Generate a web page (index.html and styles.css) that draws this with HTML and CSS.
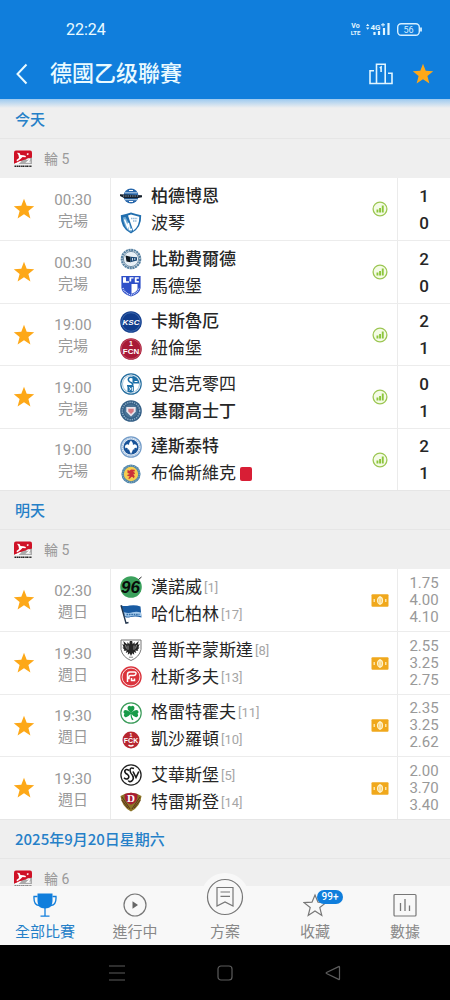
FILE: index.html
```
<!DOCTYPE html>
<html lang="zh-Hant">
<head>
<meta charset="utf-8">
<meta name="viewport" content="width=device-width, initial-scale=1">
<title>德國乙级聯賽</title>
<link rel="stylesheet" href="styles.css">
</head>
<body>
<svg class="defs" aria-hidden="true">
  <symbol id="star" viewBox="0 0 22 22"><path d="M11 .8l2.7 7 7.5.4-5.8 4.7 2 7.5L11 16.2l-6.4 4.2 2-7.5L.8 8.2l7.5-.4z" fill="currentColor"/></symbol>
  <symbol id="stats" viewBox="0 0 16 16"><circle cx="8" cy="8" r="6.9" fill="#f4fbe6" stroke="#9cc653" stroke-width="1.3"/><path d="M4.5 8.600h1.900v3H4.500zM7.100 7H9v4.600H7.100zM9.800 4.400h1.900v7.200H9.800z" fill="#8cc63c"/></symbol>
  <symbol id="cash" viewBox="0 0 18 13"><rect x=".5" y=".3" width="17" height="12.4" rx="1" fill="#f0a81c"/><ellipse cx="9" cy="6.500" rx="2.500" ry="3.300" fill="#f6c866" stroke="#fff3cc" stroke-width="1.200"/><path d="M9 2v9M3.200 5v3M14.800 5v3" stroke="#fff3cc" stroke-width="1.200"/></symbol>
  <symbol id="league" viewBox="0 0 18 18"><path d="M0 2.5Q0 .5 2 .5h14q2 0 2 2V8L0 14z" fill="#cf1126"/><path d="M18 7.5V14H0l8-3.6z" fill="#aaa"/><path d="M3 2.700l2.500.3L6.500 5l3 .3 2.500.7-.500 1.200-3-.200L6.500 9 3 11.500 2.500 10l2.500-2-.500-3zM12.500 4l1.500-1 .800 1-1 1.200zM0 14l6-3 1.500.500L4.500 14z" fill="#fff"/><path d="M12.500 9.500q3.500-1.500 3 .5L13 12.200h3.500" fill="none" stroke="#fff" stroke-width="1.200"/><path d="M.5 16.300h17" stroke="#222" stroke-width="1.500" stroke-dasharray="2 .5 1 .4"/></symbol>
</svg>

<div class="app">
  <header class="top">
    <div class="status">
      <time>22:24</time>
      <div class="status-icons">
        <svg width="11" height="14" viewBox="0 0 11 14" role="img" aria-label="VoLTE"><text x="5.500" y="6" class="tiny-text" font-size="7">Vo</text><text x="5.500" y="13" class="tiny-text" font-size="6">LTE</text></svg>
        <svg class="signal" width="24" height="14" viewBox="0 0 24 14" role="img" aria-label="4G"><path d="M0 4L1.700 1.800 3.400 4zM0 5.500L1.700 7.700 3.400 5.500z" fill="#e2f6ff"/><text x="9.500" y="7.500" class="tiny-text" font-size="8">4G</text><path d="M8.500 10v3M13 9v4M18 6v7M22.500 1v12" stroke="#e2f6ff" stroke-width="2.200"/><path d="M15 2.800h4M17 1v3.600" stroke="#e2f6ff"/></svg>
        <svg class="battery" width="25" height="13" viewBox="0 0 25 13" role="img" aria-label="56%"><rect x=".7" y=".7" width="21.600" height="11.600" rx="3.500" fill="none" stroke="#d6efff" stroke-width="1.400"/><path d="M24 4.500v4" stroke="#d6efff" stroke-width="1.800"/><text x="11.500" y="9.700" class="battery-text" font-size="9">56</text></svg>
      </div>
    </div>
    <div class="title-bar">
      <button class="icon-btn back" aria-label="返回"><svg width="12" height="22" viewBox="0 0 12 22"><path d="M10.500 1.500L1.500 11l9 9.500" fill="none" stroke="#e9faff" stroke-width="2"/></svg></button>
      <h1>德國乙级聯賽</h1>
      <button class="icon-btn table" aria-label="積分榜"><svg width="24" height="22" viewBox="0 0 24 22"><path d="M7.500 20.500V1.200h8.700v19.300M5 7.700H1v12.800h22V10.300h-4M10.800 5l1.300-1v5" fill="none" stroke="#e1f5ff" stroke-width="1.600"/></svg></button>
      <button class="icon-btn" aria-label="收藏聯賽"><svg class="star" width="22" height="22"><use href="#star"/></svg></button>
    </div>
  </header>

  <main class="list">
    <section>
      <h2 class="day">今天</h2>
      <h3 class="round"><svg width="18" height="18"><use href="#league"/></svg><span>輪 5</span></h3>
      <div class="matches">
        <article class="match">
          <button class="fav" aria-label="收藏"><svg class="star" width="22" height="22"><use href="#star"/></svg></button>
          <p class="when"><time>00:30</time><span>完場</span></p>
          <div class="teams">
            <p class="team winner"><svg class="crest" viewBox="0 0 22 22"><circle cx="11" cy="11" r="7.500" fill="#2867ab"/><path d="M5 7.800h12M4.500 14.700h13" stroke="#bcd5ec"/><path d="M0 9.200L22 10.200v2L17 13.200H4.500L0 11z" fill="#16202c"/><path d="M3 11h16" stroke="#8eadc8" stroke-dasharray="1.300 1"/><path d="M9 5.500h4M9 16.500h4" stroke="#fff" stroke-width="1.200"/></svg>柏德博恩</p>
            <p class="team"><svg class="crest" viewBox="0 0 22 22"><path d="M.8 3.200Q6 2.300 11 .6q5 1.700 10.200 2.600.5 13.300-10.200 18.200Q.3 16.500.8 3.200z" fill="#216eae"/><path d="M8 3.400l3-.8 8.300 2.100q.2 9.800-6.100 14z" fill="#fff"/><path d="M3 5.500l2.500-.6L12.500 18 11 20Q3.500 16.300 3 5.500z" fill="#75add5"/><path d="M4.500 7.500l3 7.500 1-4 1 6.500h2.500" stroke="#fff" fill="none" stroke-width="1.400"/><path d="M11 6.500h6.500M13 9h3.500" stroke="#8cb6d7" stroke-width="1.300" stroke-dasharray="1.500 .6"/></svg>波琴</p>
          </div>
          <svg class="kind" width="16" height="16"><use href="#stats"/></svg>
          <p class="score"><span>1</span><span>0</span></p>
        </article>
        <article class="match">
          <button class="fav" aria-label="收藏"><svg class="star" width="22" height="22"><use href="#star"/></svg></button>
          <p class="when"><time>00:30</time><span>完場</span></p>
          <div class="teams">
            <p class="team winner"><svg class="crest" viewBox="0 0 22 22"><circle cx="11" cy="11" r="9.200" fill="#fff" stroke="#5a83a3" stroke-width="2.200" stroke-dasharray="2.200 .5"/><circle cx="11" cy="11" r="7.600" fill="#e9f0f6" stroke="#4e7392" stroke-width=".8"/><path d="M5.500 7.500l5 1.300v5.400l-4-.7z" fill="#101820"/><path d="M10.400 8.800l6.600.4v3.300l-6.600 1.700z" fill="#1e4a75"/><path d="M12.500 10v2.500M14.800 10v2" stroke="#fff" stroke-width=".8"/></svg>比勒費爾德</p>
            <p class="team"><svg class="crest" viewBox="0 0 22 22"><path d="M1.400 1h19.200v12Q19.800 19 11 21.600 2.200 19 1.400 13z" fill="#2e4fc8"/><path d="M3 2.200h3v4h3v1.500H3zM9.500 2.200h4v1.300h-2.300v3H9.500zM18.800 2.200h-4v5.300h4V6h-2.200V3.700h2.200zM11.500 9h6v5q-1 3-6 4.700z" fill="#fff"/><path d="M3 13q1.300 5 8 7 6.700-2 8-7" fill="none" stroke="#d8e1fc" stroke-width="1.300" stroke-dasharray="1 .8"/></svg>馬德堡</p>
          </div>
          <svg class="kind" width="16" height="16"><use href="#stats"/></svg>
          <p class="score"><span>2</span><span>0</span></p>
        </article>
        <article class="match">
          <button class="fav" aria-label="收藏"><svg class="star" width="22" height="22"><use href="#star"/></svg></button>
          <p class="when"><time>19:00</time><span>完場</span></p>
          <div class="teams">
            <p class="team winner"><svg class="crest" viewBox="0 0 22 22"><circle cx="11" cy="11" r="10.800" fill="#103c8c"/><circle cx="11" cy="11" r="9.300" fill="none" stroke="#4a78ba" stroke-width=".7"/><text x="11" y="14" class="crest-text crest-italic" font-size="8" fill="#fff">KSC</text></svg>卡斯魯厄</p>
            <p class="team"><svg class="crest" viewBox="0 0 22 22"><circle cx="11" cy="11" r="10.800" fill="#a81936"/><circle cx="11" cy="11" r="9.800" fill="none" stroke="#d77689" stroke-width=".5"/><text x="11" y="7.500" class="crest-text" font-size="7" fill="#fff">1</text><text x="11" y="15.500" class="crest-text" font-size="8" fill="#fff">FCN</text></svg>紐倫堡</p>
          </div>
          <svg class="kind" width="16" height="16"><use href="#stats"/></svg>
          <p class="score"><span>2</span><span>1</span></p>
        </article>
        <article class="match">
          <button class="fav" aria-label="收藏"><svg class="star" width="22" height="22"><use href="#star"/></svg></button>
          <p class="when"><time>19:00</time><span>完場</span></p>
          <div class="teams">
            <p class="team"><svg class="crest" viewBox="0 0 22 22"><circle cx="11" cy="11" r="10.200" fill="#fff" stroke="#246d9e" stroke-width="1.200"/><circle cx="11" cy="11" r="8.500" fill="none" stroke="#5c96bd" stroke-width=".6"/><path d="M12.500 2.800q6 1.200 6.800 7.700h-6.800zM7.500 12.500h6.300v6l-3 1-3.300-.7z" fill="#1c6fa7"/><path d="M14 5Q8.300 3 8.300 6.800q.4 2 3.200 3 2.500 1.700 0 2.900H7" fill="none" stroke="#1c6fa7" stroke-width="1.600"/><path d="M9 14.500l2 1.200-1.500 1.700M12.300 14v4M14.500 8.500h3" fill="none" stroke="#fff"/></svg>史浩克零四</p>
            <p class="team winner"><svg class="crest" viewBox="0 0 22 22"><circle cx="11" cy="11" r="10.800" fill="#345f86"/><circle cx="11" cy="11" r="8.700" fill="none" stroke="#8fb0c8" stroke-width="1.400" stroke-dasharray="1.300 1"/><circle cx="11" cy="11" r="6.800" fill="#497396"/><path d="M6.300 7h9.400v4.700L11 16.500l-4.700-4.800z" fill="#e8e5ed"/><path d="M8.300 8.800h5.400v2.600L11 14l-2.700-2.600z" fill="#d67882"/></svg>基爾高士丁</p>
          </div>
          <svg class="kind" width="16" height="16"><use href="#stats"/></svg>
          <p class="score"><span>0</span><span>1</span></p>
        </article>
        <article class="match">
          <span class="fav"></span>
          <p class="when"><time>19:00</time><span>完場</span></p>
          <div class="teams">
            <p class="team winner"><svg class="crest" viewBox="0 0 22 22"><circle cx="11" cy="11" r="10.200" fill="#e4edf7" stroke="#729bc8" stroke-width="1.200"/><circle cx="11" cy="11" r="8.700" fill="none" stroke="#86aad0" stroke-dasharray="1 1"/><circle cx="11" cy="11" r="7.600" fill="#1a5499"/><path d="M11 4.500q3.300 3.200 1.200 7 .3-3.500 2.800-3.300 3 1 1.500 4.300-.8-1.300-2.300.1l.3.900h-1.500L12 16l-1 2-1-2-1-2.500H7.500l.3-.9q-1.500-1.400-2.300-.1Q4 9.200 7 8.200q2.500-.2 2.800 3.300-2.100-3.800 1.200-7z" fill="#fff"/></svg>達斯泰特</p>
            <p class="team"><svg class="crest" viewBox="0 0 22 22"><circle cx="11" cy="11" r="9.600" fill="#4e83aa"/><circle cx="11" cy="11" r="8.300" fill="none" stroke="#a6c4c9" stroke-width=".8" stroke-dasharray="1 1"/><circle cx="11" cy="11" r="7.200" fill="#f5ce51"/><path d="M7.500 7l2 .8L11 6.500l3.500.2.500 1.500-2 .3 2 1.500-.5 1.200-1.300-.4 1.500 2.700-.9 1.700-1.500-1.500-1 .3-1.500 1.700-1.700-.3 1.700-2.200-2.500-.2.200-1.300 2.500-.6-2.500-1.200z" fill="#cc3238"/></svg>布倫斯維克<span class="red-card" role="img" aria-label="紅牌"></span></p>
          </div>
          <svg class="kind" width="16" height="16"><use href="#stats"/></svg>
          <p class="score"><span>2</span><span>1</span></p>
        </article>
      </div>
    </section>

    <section>
      <h2 class="day">明天</h2>
      <h3 class="round"><svg width="18" height="18"><use href="#league"/></svg><span>輪 5</span></h3>
      <div class="matches">
        <article class="match">
          <button class="fav" aria-label="收藏"><svg class="star" width="22" height="22"><use href="#star"/></svg></button>
          <p class="when"><time>02:30</time><span>週日</span></p>
          <div class="teams">
            <p class="team"><svg class="crest" viewBox="0 0 22 22"><circle cx="11" cy="11" r="10.800" fill="#3ba15c"/><text x="10.500" y="17" class="crest-text crest-italic" font-size="17" fill="#080c09">96</text><path d="M18.500 3.500L21.500 1" stroke="#222"/></svg>漢諾威<small>[1]</small></p>
            <p class="team"><svg class="crest" viewBox="0 0 22 22"><path d="M1 2.200q4 1.600 8.500.3 6-1 11 1l1 11q-6-1.800-11-.4-3 1-5.500 0z" fill="#195ba2"/><path d="M4 9.300q5 1.200 8.500-.1 4-.9 8.500.2v3.800q-5-1.200-9-.1-3.500 1-7 .2z" fill="#a5caec"/><path d="M6.500 11.500h13" stroke="#326da6" stroke-width="1.600" stroke-dasharray="1.600 .8"/><path d="M1 2.200l5 18 2.500-.7" fill="none" stroke="#22354c" stroke-width="1.400"/></svg>哈化柏林<small>[17]</small></p>
          </div>
          <svg class="kind" width="18" height="13"><use href="#cash"/></svg>
          <p class="odds"><span>1.75</span><span>4.00</span><span>4.10</span></p>
        </article>
        <article class="match">
          <button class="fav" aria-label="收藏"><svg class="star" width="22" height="22"><use href="#star"/></svg></button>
          <p class="when"><time>19:30</time><span>週日</span></p>
          <div class="teams">
            <p class="team"><svg class="crest" viewBox="0 0 22 22"><path d="M1 1h20v9.500Q19.500 18 11 21.500 2.500 18 1 10.500z" fill="#fff" stroke="#777"/><path d="M9.800 2h2.400l.5 3.200L14.500 3l.3 2.500L18.700 2l-1 4 2-1.200-1.300 3.600 1.100.2-2 2.500.8.900-3-.4 1 2.400-2.400-.9.300 2.600-1.900-1.400L11 17l-1.300-2.700-1.900 1.400.3-2.600-2.400.9 1-2.400-3 .4.800-.9-2-2.500 1.100-.2L2.300 4.800l2 1.200-1-4 3.900 3.500.3-2.500 1.800 2.200z" fill="#252525"/><path d="M9 18.200h4" stroke="#888"/><path d="M8 6.500v4.300M14 6.500v4.300M5.500 6l1 3.500M16.500 6l-1 3.500" stroke="#bbb" stroke-width=".7"/></svg>普斯辛蒙斯達<small>[8]</small></p>
            <p class="team"><svg class="crest" viewBox="0 0 22 22"><circle cx="11" cy="11" r="10.700" fill="#da333c"/><circle cx="11" cy="11" r="8.900" fill="none" stroke="#fff" stroke-width=".8"/><path d="M7.500 16V8.500q0-2.500 2.500-2.500h4.500q1.700 0 1.500 1.700-.2 1.800-2 1.800h-3.500q-1.500 0-1.500 1.500v2.200M11.500 12v2.500h3V12.500" fill="none" stroke="#fff" stroke-width="1.500"/></svg>杜斯多夫<small>[13]</small></p>
          </div>
          <svg class="kind" width="18" height="13"><use href="#cash"/></svg>
          <p class="odds"><span>2.55</span><span>3.25</span><span>2.75</span></p>
        </article>
        <article class="match">
          <button class="fav" aria-label="收藏"><svg class="star" width="22" height="22"><use href="#star"/></svg></button>
          <p class="when"><time>19:30</time><span>週日</span></p>
          <div class="teams">
            <p class="team"><svg class="crest" viewBox="0 0 22 22"><circle cx="11" cy="11" r="10.200" fill="#fff" stroke="#3a9b59" stroke-width="1.200"/><path d="M11 11Q6.200 7 8 4.500q1.500-1.700 3 0 1.500-1.700 3 0Q15.800 7 11 11q4.500-4.500 7-2.500 1.500 1.700-.5 3.200 1.500 2-.5 3.300-2.500 1-5.500-3 .1 3.500 2 5.500l-1.500.8q-1.600-2.800-1.500-6.300-3 4-5.500 3-2-1.300-.5-3.300-2-1.500-.5-3.200Q6.500 6.500 11 11z" fill="#189b48"/></svg>格雷特霍夫<small>[11]</small></p>
            <p class="team"><svg class="crest" viewBox="0 0 22 22"><circle cx="11" cy="11" r="8.500" fill="#b8262f"/><text x="11" y="8" class="crest-text" font-size="5" fill="#fff">1</text><text x="11" y="14" class="crest-text" font-size="7" fill="#fff">FCK</text><path d="M8.500 16q2.500 2 5 0" fill="none" stroke="#fff" stroke-width="1.500"/></svg>凱沙羅頓<small>[10]</small></p>
          </div>
          <svg class="kind" width="18" height="13"><use href="#cash"/></svg>
          <p class="odds"><span>2.35</span><span>3.25</span><span>2.62</span></p>
        </article>
        <article class="match">
          <button class="fav" aria-label="收藏"><svg class="star" width="22" height="22"><use href="#star"/></svg></button>
          <p class="when"><time>19:30</time><span>週日</span></p>
          <div class="teams">
            <p class="team"><svg class="crest" viewBox="0 0 22 22"><circle cx="11" cy="11" r="10.100" fill="#fff" stroke="#222" stroke-width="1.300"/><path d="M9 6.500Q6 4.500 4.800 6.800q-.3 2 2.500 3.500 2.700 2 .7 4.200-2 1.200-4-.8" fill="none" stroke="#171717" stroke-width="1.600"/><path d="M14 4.500Q10 2.800 10 6.500q.3 2.500 2.300 4.500 2.300 3.500-.5 6-2.500 1.500-3.500-.5" fill="none" stroke="#171717" stroke-width="1.600"/><path d="M13 7.500l3 6L18.800 7.500" fill="none" stroke="#171717" stroke-width="1.600"/></svg>艾華斯堡<small>[5]</small></p>
            <p class="team"><svg class="crest" viewBox="0 0 22 22"><path d="M.5 5Q11-1.500 21.500 5 20.500 15.500 11 20.500 1.500 15.500.5 5z" fill="#8b7426"/><path d="M2 6l8 12M1.800 9l6 8M20 6l-8 12M20.200 9l-6 8" stroke="#5a321f"/><path d="M4.500 3.300Q11 .3 17.500 3.300q.5 8-6.500 10.500Q4 11.300 4.500 3.300z" fill="#a81c34"/><text x="11" y="11.300" class="crest-text crest-serif" font-size="11" fill="#fff">D</text></svg>特雷斯登<small>[14]</small></p>
          </div>
          <svg class="kind" width="18" height="13"><use href="#cash"/></svg>
          <p class="odds"><span>2.00</span><span>3.70</span><span>3.40</span></p>
        </article>
      </div>
    </section>

    <section>
      <h2 class="day">2025年9月20日星期六</h2>
      <h3 class="round"><svg width="18" height="18"><use href="#league"/></svg><span>輪 6</span></h3>
    </section>
  </main>

  <nav class="tabs">
    <a href="#all" class="tab active"><svg width="24" height="24" viewBox="0 0 24 24"><path d="M4.500.500h15V8q0 7.500-7.500 7.500T4.500 8z" fill="#107edc"/><path d="M4.500 3.500H1q-.500 8.500 5 9M19.500 3.500H23q.500 8.500-5 9M12 15v8M7.500 23.200h9" fill="none" stroke="#107edc" stroke-width="1.300"/></svg>全部比賽</a>
    <a href="#live" class="tab"><svg width="24" height="24" viewBox="0 0 24 24"><circle cx="12" cy="12" r="11" fill="none" stroke="#777" stroke-width="1.200"/><path d="M9.500 8.200l5.500 3.800-5.500 3.800z" fill="#666"/></svg>進行中</a>
    <a href="#plan" class="tab plan"><span class="bump"><svg width="38" height="38" viewBox="0 0 38 38"><circle cx="19" cy="19" r="17.500" fill="none" stroke="#777" stroke-width="1.200"/><path d="M11 9.500h16v18.500L19 24l-8 4zM14.500 14h9.500M14.500 18.300h9.500" fill="none" stroke="#777" stroke-width="1.200"/></svg></span>方案</a>
    <a href="#fav" class="tab"><span class="badged"><svg width="24" height="24" viewBox="0 0 24 24"><path d="M12 2l3 7.200 8 .4-6.200 5 2 7.900-6.800-4.500-6.800 4.500 2-7.900-6.200-5 8-.4z" fill="none" stroke="#777" stroke-width="1.200"/></svg><span class="badge">99+</span></span>收藏</a>
    <a href="#data" class="tab"><svg width="24" height="24" viewBox="0 0 24 24"><rect x="1" y="1.500" width="22" height="21.500" rx="1" fill="none" stroke="#777" stroke-width="1.200"/><path d="M7.500 10v8M12 6v12M16.500 12.500V18" stroke="#777" stroke-width="1.300"/></svg>數據</a>
  </nav>

  <div class="system">
    <button aria-label="最近使用"><svg width="16" height="16" viewBox="0 0 16 16"><path d="M0 1h16M0 8h16M0 15h16" stroke="#5c5c5c" stroke-width="1.200"/></svg></button>
    <button aria-label="主畫面"><svg width="16" height="16" viewBox="0 0 16 16"><rect x="1" y="1" width="14" height="14" rx="3" fill="none" stroke="#5c5c5c" stroke-width="1.200"/></svg></button>
    <button aria-label="上一頁"><svg width="16" height="16" viewBox="0 0 16 16"><path d="M14.500 2v12q0 .800-.800.400L1.500 8.500q-.700-.500 0-1L13.700 1.600q.800-.400.800.400z" fill="none" stroke="#5c5c5c" stroke-width="1.200"/></svg></button>
  </div>
</div>
</body>
</html>
```

FILE: styles.css
```
* { box-sizing: border-box; }
body {
  margin: 0;
  font-family: Roboto, "Noto Sans CJK TC", sans-serif;
  color: #262626;
  background: #efefef;
}
h1, h2, h3, p { margin: 0; }
button { padding: 0; border: 0; background: none; font: inherit; cursor: pointer; }
svg { display: block; flex: none; }
.defs { position: absolute; width: 0; height: 0; }
.crest-text { font-family: "Liberation Sans", sans-serif; font-weight: 700; text-anchor: middle; }
.crest-italic { font-style: italic; }
.crest-serif { font-family: "Liberation Serif", serif; }
.tiny-text { font-family: Roboto, sans-serif; font-weight: 700; text-anchor: middle; fill: #e2f6ff; }
.battery-text { font-family: Roboto, sans-serif; text-anchor: middle; fill: #d6efff; }

.app { display: flex; flex-direction: column; height: 100vh; }

.top { flex: none; position: relative; background: #107edc; color: #eafaff; }
.top::after {
  content: "";
  position: absolute;
  top: 100%;
  left: 0;
  right: 0;
  height: 9px;
  background: linear-gradient(#9dcaf0, #efefef00);
}
.status {
  display: flex;
  align-items: center;
  justify-content: space-between;
  height: 48px;
  padding: 10px 28px 0 66px;
  font-size: 16px;
}
.status-icons { display: flex; align-items: center; }
.signal { margin-left: 5px; }
.battery { margin-left: 7px; }
.title-bar { display: flex; align-items: center; height: 51px; padding: 0 16px; }
.back { margin-right: 22px; }
.table { margin-right: 19px; }
.title-bar h1 { flex: 1; font-size: 22px; line-height: 30px; font-weight: 500; }
.star { color: #fda818; }

.list { flex: 1; min-height: 0; overflow-y: auto; scrollbar-width: none; }
.day {
  height: 40px;
  padding: 0 15px;
  border-top: 1px solid #e6e6e6;
  border-bottom: 1px solid #e6e6e6;
  font-family: "Noto Sans CJK TC", sans-serif;
  font-size: 15px;
  line-height: 38px;
  font-weight: 500;
  color: #2580c8;
}
.round {
  display: flex;
  align-items: center;
  gap: 12px;
  height: 39px;
  padding: 0 14px;
  font-size: 14px;
  line-height: 16px;
  font-weight: 400;
  color: #9a9a9a;
}
.matches { display: grid; grid-auto-rows: 62px 63px; background: #fff; }
.match {
  display: grid;
  grid-template-columns: 48px 62px 1fr 34px 53px;
  align-items: stretch;
}
.match + .match { border-top: 1px solid #ececec; }
.fav { display: grid; place-items: center; }
.when {
  display: flex;
  flex-direction: column;
  justify-content: center;
  padding-top: 3px;
  padding-right: 12px;
  text-align: center;
  font-size: 15px;
  line-height: 21px;
  color: #999;
}
.teams {
  display: flex;
  flex-direction: column;
  justify-content: center;
  padding-top: 1px;
  padding-left: 9px;
  border-left: 1px solid #ebebeb;
}
.team { display: flex; align-items: center; height: 27px; font-size: 17px; line-height: 27px; white-space: nowrap; }
.winner { font-weight: 500; }
.crest { width: 22px; height: 22px; margin-right: 9px; }
.team small { margin-left: 2px; font-size: 13px; color: #a6a6a6; }
.red-card { width: 12px; height: 14px; margin-left: 4px; border-radius: 2px; background: #d81e35; }
.kind { place-self: center; }
.score, .odds {
  display: flex;
  flex-direction: column;
  justify-content: center;
  border-left: 1px solid #ebebeb;
  text-align: center;
}
.score { padding-top: 1px; font-size: 17px; line-height: 27px; font-weight: 500; }
.odds { font-size: 15px; line-height: 17px; color: #999; }

.tabs { flex: none; display: grid; grid-template-columns: repeat(5, 1fr); height: 59px; background: #f8f8f8; }
.tab {
  display: flex;
  flex-direction: column;
  align-items: center;
  gap: 5px;
  padding-top: 7px;
  font-size: 15px;
  line-height: 20px;
  color: #888;
  text-decoration: none;
  white-space: nowrap;
}
.active { color: #2580c8; }
.plan { padding-top: 0; }
.bump {
  display: grid;
  place-items: center;
  width: 48px;
  height: 48px;
  margin-top: -13px;
  margin-bottom: -4px;
  border-radius: 50%;
  background: #f8f8f8;
  position: relative;
}
.badged { position: relative; }
.badge {
  position: absolute;
  left: 14px;
  top: -3px;
  width: 26px;
  height: 14px;
  border-radius: 7px;
  background: #107edc;
  color: #fff;
  font-size: 10px;
  line-height: 14px;
  font-weight: 500;
  text-align: center;
}

.system { flex: none; display: flex; justify-content: center; gap: 92px; height: 55px; background: #000; }
```
